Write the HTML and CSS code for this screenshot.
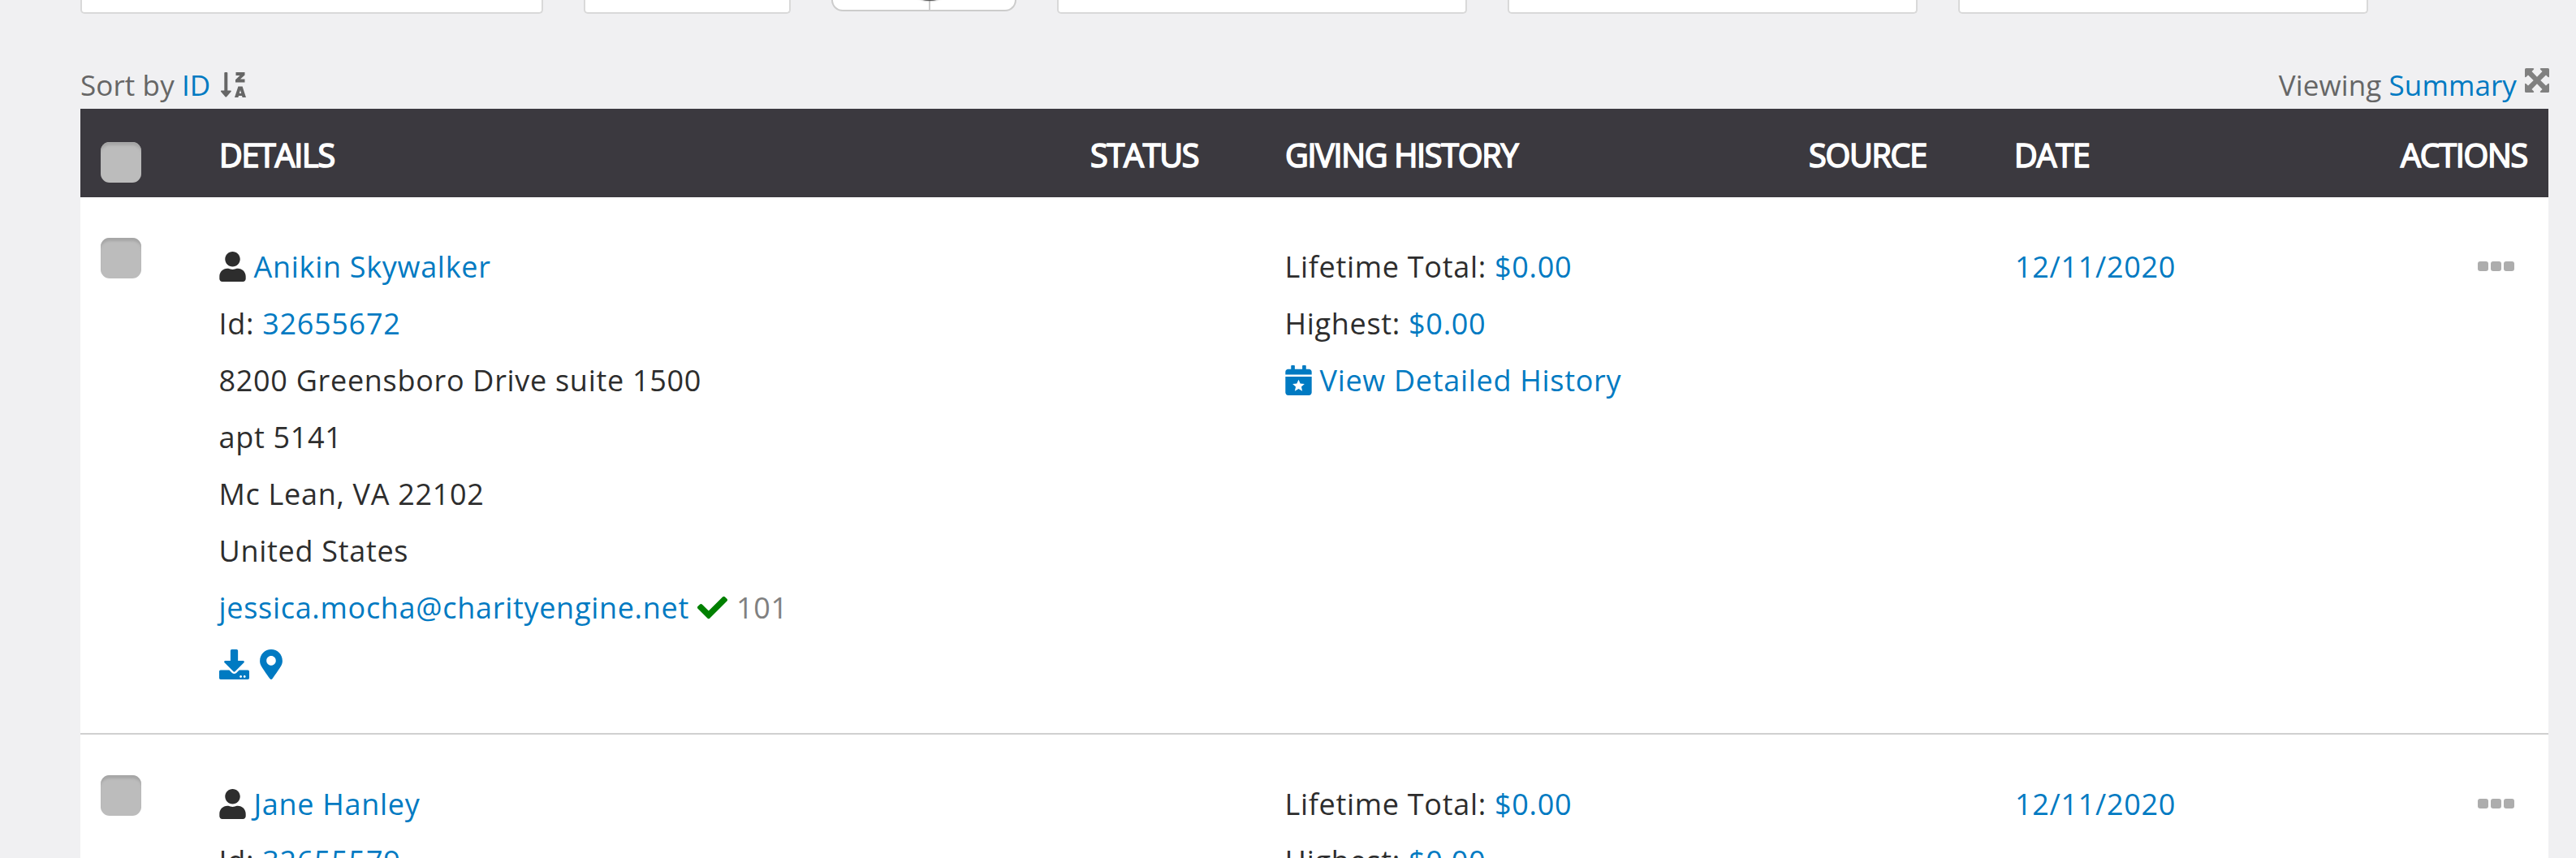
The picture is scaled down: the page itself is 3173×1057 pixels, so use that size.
FILE: index.html
```
<!DOCTYPE html>
<html lang="en">
<head>
<meta charset="utf-8">
<title>Contacts</title>
<link rel="stylesheet" href="styles.css">
</head>
<body>
<svg class="sprite" aria-hidden="true">
  <symbol id="user" viewBox="0 0 448 512"><path d="M224 256c70.7 0 128-57.3 128-128S294.700 0 224 0 96 57.300 96 128s57.300 128 128 128zm89.600 32h-16.700c-22.200 10.200-46.900 16-72.900 16s-50.600-5.800-72.900-16h-16.700C60.200 288 0 348.200 0 422.400V464c0 26.500 21.500 48 48 48h352c26.500 0 48-21.500 48-48v-41.600c0-74.200-60.200-134.400-134.400-134.400z"/></symbol>
  <symbol id="check" viewBox="0 0 512 512"><path d="M173.900 439.400l-166.400-166.400c-10-10-10-26.200 0-36.200l36.200-36.200c10-10 26.200-10 36.200 0L192 312.700 432.100 72.600c10-10 26.200-10 36.200 0l36.200 36.200c10 10 10 26.200 0 36.200l-294.400 294.400c-10 10-26.200 10-36.200 0z"/></symbol>
  <symbol id="download" viewBox="0 0 512 512"><path d="M216 0h80c13.300 0 24 10.700 24 24v168h87.700c17.800 0 26.700 21.500 14.100 34.100L269.700 378.300c-7.500 7.500-19.800 7.500-27.300 0L90.100 226.100c-12.600-12.600-3.700-34.100 14.100-34.100H192V24c0-13.300 10.700-24 24-24zm296 376v112c0 13.300-10.700 24-24 24H24c-13.300 0-24-10.700-24-24V376c0-13.300 10.700-24 24-24h146.700l49 49c20.100 20.100 52.500 20.100 72.600 0l49-49H488c13.300 0 24 10.700 24 24zm-124 88c0-11-9-20-20-20s-20 9-20 20 9 20 20 20 20-9 20-20zm64 0c0-11-9-20-20-20s-20 9-20 20 9 20 20 20 20-9 20-20z"/></symbol>
  <symbol id="pin" viewBox="0 0 384 512"><path d="M172.300 501.700C27 291 0 269.400 0 192 0 86 86 0 192 0s192 86 192 192c0 77.400-27 99-172.300 309.700-9.500 13.800-29.900 13.800-39.400 0zM192 272c44.200 0 80-35.800 80-80s-35.800-80-80-80-80 35.800-80 80 35.800 80 80 80z"/></symbol>
  <symbol id="calendar" viewBox="0 0 448 512"><path fill-rule="evenodd" d="M0 464c0 26.500 21.500 48 48 48h352c26.500 0 48-21.500 48-48V192H0zM448 112c0-26.500-21.500-48-48-48h-48V12c0-6.600-5.400-12-12-12h-40c-6.600 0-12 5.400-12 12v52H160V12c0-6.600-5.400-12-12-12h-40c-6.600 0-12 5.400-12 12v52H48C21.500 64 0 85.500 0 112v48h448zM224 246l30 66 72 7-54 48 16 71-64-37-64 37 16-71-54-48 72-7z"/></symbol>
  <symbol id="sort" viewBox="0 0 31 31"><path fill-rule="evenodd" d="M4.300 1Q4.300 0 5.300 0h2q1 0 1 1v21.500h3.500q1.700 0 .7 1.500L7.300 30q-1 1-2 0L.2 24q-1-1.500.7-1.500h3.400zM18.500 0h11v3.400L24 8.600h5.500v4H18V9.200L23.500 4h-5zM21.400 17.500h5.200L31 31h-4.400l-.6-2h-4l-.6 2H17zM24 22l-1.200 4h2.400z"/></symbol>
  <symbol id="expand" viewBox="0 0 30 30"><path d="M1.500 0H10Q12 0 10.800 1.700L8.500 4 15 10.700 21.500 4 19.200 1.700Q18 0 20 0h8.500Q30 0 30 1.500V10q0 2-1.700.8L26 8.500 19.300 15l6.700 6.500 2.300-2.300Q30 18 30 20v8.500q0 1.500-1.500 1.500H20q-2 0-.8-1.700l2.300-2.300L15 19.300 8.500 26l2.300 2.300Q12 30 10 30H1.500Q0 30 0 28.500V20q0-2 1.700-.8L4 21.500 10.700 15 4 8.500 1.700 10.800Q0 12 0 10V1.500Q0 0 1.500 0z"/></symbol>
</svg>

<div class="filters">
  <div class="field field-name"></div>
  <div class="field field-short"></div>
  <div class="toggle"><div class="toggle-half"></div><div class="toggle-knob"></div></div>
  <div class="field"></div>
  <div class="field"></div>
  <div class="field"></div>
</div>

<div class="toolbar">
  <div class="sort">Sort by <a>ID</a><svg class="i-sort"><use href="#sort"/></svg></div>
  <div class="view">Viewing <a>Summary</a><svg class="i-expand"><use href="#expand"/></svg></div>
</div>

<main class="table">
  <div class="row head">
    <div><span class="box"></span></div>
    <div>DETAILS</div>
    <div>STATUS</div>
    <div>GIVING HISTORY</div>
    <div>SOURCE</div>
    <div>DATE</div>
    <div class="actions">ACTIONS</div>
  </div>

  <div class="row">
    <div><span class="box"></span></div>
    <div class="cell">
      <p><svg class="i-user"><use href="#user"/></svg><a>Anikin Skywalker</a></p>
      <p>Id: <a>32655672</a></p>
      <p>8200 Greensboro Drive suite 1500</p>
      <p>apt 5141</p>
      <p>Mc Lean, VA 22102</p>
      <p>United States</p>
      <p><a>jessica.mocha@charityengine.net</a><svg class="i-check"><use href="#check"/></svg><span class="score">101</span></p>
      <p><svg class="i-download"><use href="#download"/></svg><svg class="i-pin"><use href="#pin"/></svg></p>
    </div>
    <div></div>
    <div class="cell">
      <p>Lifetime Total: <a>$0.00</a></p>
      <p>Highest: <a>$0.00</a></p>
      <p><svg class="i-calendar"><use href="#calendar"/></svg><a>View Detailed History</a></p>
    </div>
    <div></div>
    <div class="cell date"><p><a>12/11/2020</a></p></div>
    <div class="dots"><i></i><i></i><i></i></div>
  </div>

  <div class="row last">
    <div><span class="box"></span></div>
    <div class="cell">
      <p><svg class="i-user"><use href="#user"/></svg><a>Jane Hanley</a></p>
      <p>Id: <a>32655579</a></p>
    </div>
    <div></div>
    <div class="cell">
      <p>Lifetime Total: <a>$0.00</a></p>
      <p>Highest: <a>$0.00</a></p>
    </div>
    <div></div>
    <div class="cell date"><p><a>12/11/2020</a></p></div>
    <div class="dots"><i></i><i></i><i></i></div>
  </div>
</main>
</body>
</html>
```
FILE: styles.css
```
* { box-sizing: border-box; }
html { height: 1057px; overflow: hidden; }
body {
  margin: 0;
  height: 1057px;
  overflow: hidden;
  background: #f0f0f2;
  color: #2d2d2d;
  font: 36px/70px "Open Sans", sans-serif;
  letter-spacing: 0.7px;
}
p { margin: 0; white-space: nowrap; }
a { color: #007ac2; }
svg { fill: currentColor; }
.sprite { position: absolute; width: 0; height: 0; }

.filters { display: flex; gap: 50px; height: 17px; padding-left: 99px; }
.field {
  width: 505px;
  height: 17px;
  background: #fff;
  border: 2px solid #d9d9d9;
  border-top: 0;
  border-radius: 0 0 5px 5px;
}
.field-name { width: 570px; }
.field-short { width: 255px; }
.toggle {
  position: relative;
  width: 228px;
  height: 14px;
  background: #fff;
  border: 2px solid #ccc;
  border-top: 0;
  border-radius: 0 0 14px 14px;
  overflow: hidden;
}
.toggle-half { width: 120px; height: 12px; border-right: 2px solid #ccc; }
.toggle-knob {
  position: absolute;
  left: 85px;
  top: -67px;
  width: 68px;
  height: 68px;
  border-radius: 50%;
  background: #555;
  box-shadow: 0 0 2px #777;
}

.toolbar {
  display: flex;
  justify-content: space-between;
  height: 117px;
  padding: 53px 33px 0 99px;
  color: #666;
  font-size: 35px;
  letter-spacing: 0.1px;
  line-height: 70px;
}
.i-sort { width: 31px; height: 31px; margin-left: 13px; vertical-align: -2px; }
.i-expand { width: 30px; height: 30px; margin-left: 10px; vertical-align: 4px; color: #808080; }

.table { width: 3040px; height: 923px; overflow: hidden; margin-left: 99px; background: #fff; }
.row {
  display: grid;
  grid-template-columns: 170px 1073px 240px 645px 253px 400px 1fr;
  height: 662px;
  padding-top: 50px;
  border-bottom: 2px solid #d0d0d0;
}
.last { height: 152px; border: 0; }
.cell { padding: 1px 0 0 0.500px; }
.date { padding-left: 2px; }
.head {
  height: 109px;
  padding: 0 26px 0 0;
  border: 0;
  background: #3b393f;
  color: #fff;
  font-size: 39.600px;
  line-height: 115px;
  letter-spacing: -1.3px;
  -webkit-text-stroke: 1.700px #fff;
}
.head > div { padding-left: 1px; height: 109px; }
.head > div:first-child { padding-left: 0; }
.actions { text-align: right; }
.box {
  display: block;
  width: 50px;
  height: 50px;
  margin-left: 25px;
  border-radius: 11px;
  background: #bcbcbc;
  box-shadow: inset 0 5px 3px -1px #a6a6a6;
}
.head .box { margin-top: 41px; }
.i-user { width: 33px; height: 37px; margin-right: 10px; vertical-align: -5px; }
.i-check { width: 37px; height: 37px; margin: 0 11px 0 10px; vertical-align: -5px; color: #008000; }
.score { color: #808080; }
.i-download { width: 37px; height: 37px; margin-right: 13px; vertical-align: -5px; color: #007ac2; }
.i-pin { width: 28px; height: 37px; vertical-align: -5px; color: #007ac2; }
.i-calendar { width: 33px; height: 37px; margin-right: 10px; vertical-align: -5px; color: #007ac2; }
.dots { display: flex; gap: 3px; justify-content: flex-end; padding: 29px 42px 0 0; }
.dots i { width: 13px; height: 12px; border-radius: 3px; background: #adadad; }
```
